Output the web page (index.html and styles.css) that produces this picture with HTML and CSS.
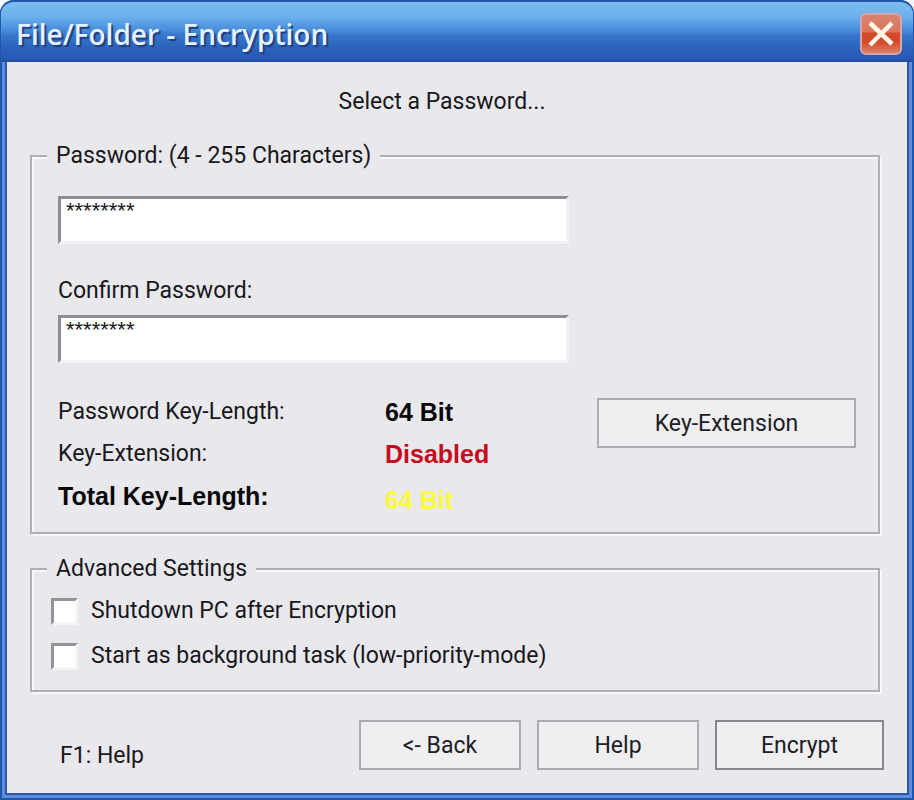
FILE: index.html
```html
<!DOCTYPE html>
<html lang="en">
<head>
<meta charset="utf-8">
<meta name="viewport" content="width=device-width, initial-scale=1">
<title>File/Folder - Encryption</title>
<link rel="stylesheet" href="styles.css">
</head>
<body>
<main class="window">
  <header class="titlebar">
    <h1 class="title">File/Folder - Encryption</h1>
    <button class="close" type="button" aria-label="Close">
      <svg viewBox="0 0 38 38" aria-hidden="true"><path d="M8 8 L30 29 M30 8 L8 30" fill="none" stroke="#fff8e8" stroke-width="4.5"/></svg>
    </button>
  </header>
  <form class="content">
    <p class="prompt">Select a Password...</p>

    <fieldset class="group group-password">
      <legend><label for="password">Password: (4 - 255 Characters)</label></legend>
      <input class="field" id="password" type="text" value="********" autocomplete="off">
      <label class="field-label" for="confirm">Confirm Password:</label>
      <input class="field" id="confirm" type="text" value="********" autocomplete="off">
      <div class="summary">
        <dl class="lengths">
          <dt>Password Key-Length:</dt><dd>64 Bit</dd>
          <dt>Key-Extension:</dt><dd class="disabled">Disabled</dd>
          <dt class="total">Total Key-Length:</dt><dd class="weak">64 Bit</dd>
        </dl>
        <button class="button button-extension" type="button">Key-Extension</button>
      </div>
    </fieldset>

    <fieldset class="group group-advanced">
      <legend>Advanced Settings</legend>
      <label class="option"><input type="checkbox"><span>Shutdown PC after Encryption</span></label>
      <label class="option"><input type="checkbox"><span>Start as background task (low-priority-mode)</span></label>
    </fieldset>

    <footer class="actions">
      <span class="hint">F1: Help</span>
      <button class="button" type="button">&lt;- Back</button>
      <button class="button" type="button">Help</button>
      <button class="button button-default" type="submit">Encrypt</button>
    </footer>
  </form>
</main>
</body>
</html>
```
FILE: styles.css
```css
* {
  box-sizing: border-box;
}

body {
  margin: 0;
  background: #f4f8fa;
  color: #18181c;
  font: 23px/28px Roboto, "Liberation Sans", sans-serif;
}

.window {
  display: flex;
  flex-direction: column;
  min-height: 100vh;
  padding: 0 5px 5px;
  border-radius: 14px 14px 0 0;
  background: #5d8fd8;
  box-shadow: inset 0 0 0 2px #1f56ae;
  overflow: hidden;
}

.titlebar {
  display: flex;
  align-items: center;
  justify-content: space-between;
  height: 62px;
  margin: 0 -5px;
  padding: 4px 11px 0 15px;
  border: solid #2458ac;
  border-width: 2px 1px 0;
  border-radius: 14px 14px 0 0;
  background: linear-gradient(#7dbdf0, #6cb0ec 24%, #4a90dc 45%, #3878cc 55%, #2c62bd 75%, #2858b4 94%, #24489c);
}

.title {
  margin: 0;
  color: #e6f2ff;
  font: 600 28px/36px "Open Sans", "Noto Sans", sans-serif;
  text-shadow: 2px 2px 1px #1c3f80;
}

.close {
  width: 42px;
  height: 42px;
  padding: 0;
  border: 2px solid #d9a3ac;
  border-radius: 6px;
  background: linear-gradient(#d88470, #dc765c 44%, #d4492a 48%, #d44c2c 72%, #dc8068);
}

.close svg {
  display: block;
  width: 100%;
  height: 100%;
}

.content {
  flex: 1;
  display: flex;
  flex-direction: column;
  padding: 26px 23px 23px;
  border: solid #2c58a8;
  border-width: 0 2px 2px;
  background: #e9e8ed;
}

.prompt {
  margin: 0 0 26px;
  padding-right: 30px;
  text-align: center;
}

.group {
  min-width: 0;
  margin: 0 4px 0 0;
  border: 2px solid #b0b0b4;
  box-shadow: 2px 2px 0 #f8f8fb, inset 2px 2px 0 #f8f8fb;
}

.group legend {
  padding: 0 9px;
  background: #e9e8ed;
}

.group-password {
  padding: 26px 22px 18px 26px;
}

.group-password legend {
  margin-left: -11px;
}

.group-advanced {
  margin-top: 21px;
  padding: 14px 19px 20px;
}

.group-advanced legend {
  margin-left: -4px;
}

.field {
  display: block;
  width: 64%;
  height: 48px;
  padding: 0 5px 18px;
  border: 3px solid;
  border-color: #8e8d94 #f3f3f6 #f3f3f6 #8e8d94;
  border-radius: 0;
  outline: 0;
  background: #fff;
  color: #18181c;
  font: 22px/24px "Liberation Sans", sans-serif;
}

.field-label {
  display: block;
  margin: 33px 0 10px;
}

.summary {
  display: flex;
  justify-content: space-between;
  align-items: flex-start;
  margin-top: 35px;
}

.lengths {
  flex: 1;
  display: grid;
  grid-template-columns: 327px 1fr;
  row-gap: 14px;
  margin: 0;
}

.lengths dd,
.lengths .total {
  margin: 0;
  color: #08080a;
  font: 700 25px/28px "Liberation Sans", sans-serif;
}

.lengths dd.disabled {
  color: #c60c1c;
}

.lengths dd.weak {
  padding-top: 4px;
  color: #fbfb38;
}

.button {
  width: 162px;
  height: 50px;
  padding: 2px 0 0;
  border: 2px solid #acacb0;
  border-radius: 0;
  background: #efeff1;
  color: #202024;
  font: inherit;
}

.button-extension {
  width: 259px;
}

.button-default {
  width: 169px;
  border-color: #88888c;
}

.option {
  display: flex;
  align-items: center;
  gap: 13px;
}

.option + .option {
  margin-top: 17px;
}

.option input {
  appearance: none;
  width: 27px;
  height: 27px;
  margin: 0;
  border: solid;
  border-width: 3px;
  border-color: #94939a #f5f5f8 #f5f5f8 #94939a;
  background: #fff;
}

.actions {
  display: flex;
  align-items: flex-end;
  gap: 16px;
  margin-top: auto;
}

.hint {
  margin: 0 auto 0 30px;
}
```
